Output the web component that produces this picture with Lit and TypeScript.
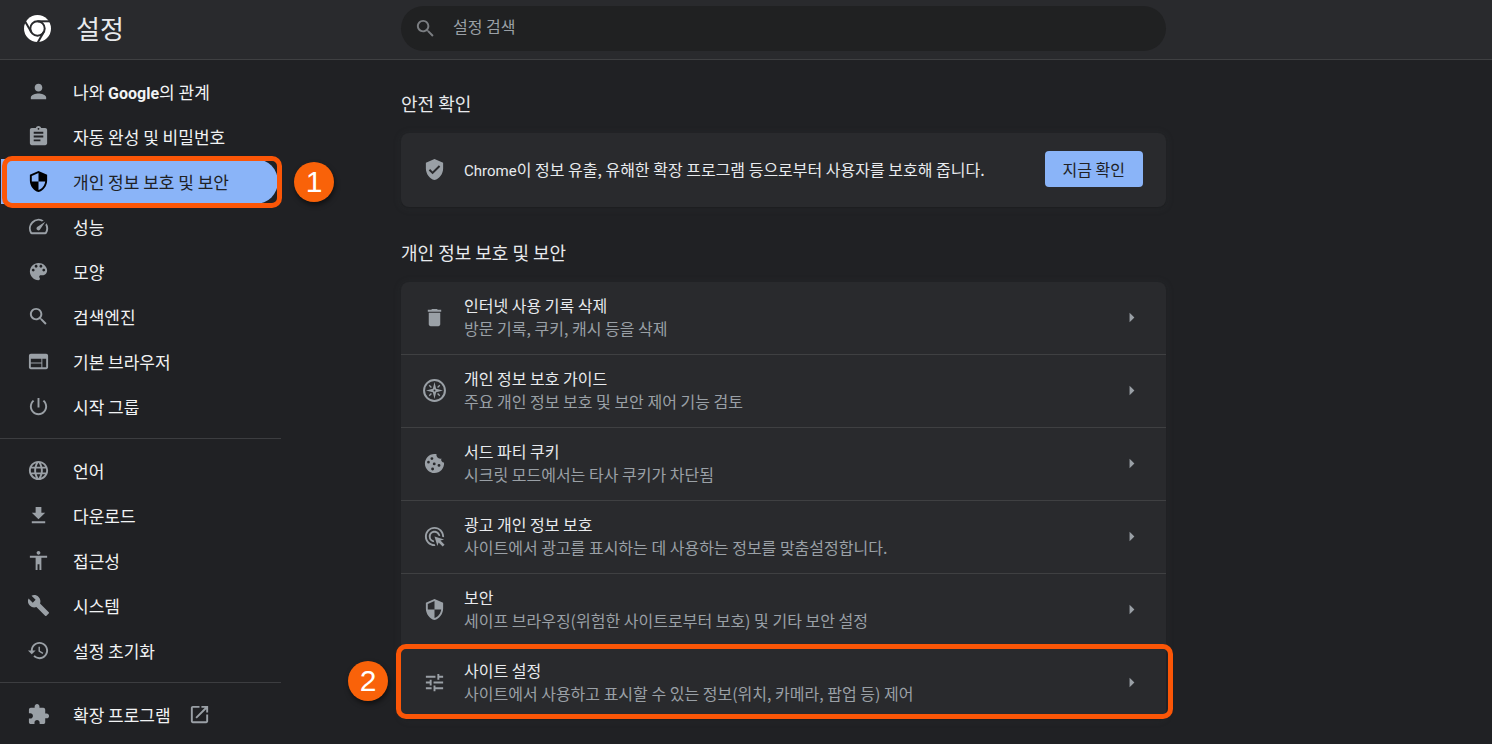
import { LitElement, html, css, svg } from "lit";
import { customElement, state } from "lit/decorators.js";
import { classMap } from "lit/directives/class-map.js";

const ICONS: Record<string, unknown> = {
  person: svg`<path d="M12 12c2.21 0 4-1.79 4-4s-1.79-4-4-4-4 1.79-4 4 1.79 4 4 4zm0 2c-2.67 0-8 1.34-8 4v2h16v-2c0-2.66-5.33-4-8-4z"/>`,
  clipboard: svg`<path d="M19 3h-4.18C14.4 1.84 13.3 1 12 1c-1.3 0-2.4.84-2.82 2H5c-1.1 0-2 .9-2 2v14c0 1.1.9 2 2 2h14c1.1 0 2-.9 2-2V5c0-1.1-.9-2-2-2zm-7 0c.55 0 1 .45 1 1s-.45 1-1 1-1-.45-1-1 .45-1 1-1zm2 14H7v-2h7v2zm3-4H7v-2h10v2zm0-4H7V7h10v2z"/>`,
  shield: svg`<path fill-rule="evenodd" d="M12 1 3 5v6c0 5.550 3.840 10.740 9 12 5.160-1.260 9-6.450 9-12V5l-9-4zM12 3.190V12H5V6.300l7-3.110zM12 12h7c-.53 4.120-3.280 7.790-7 8.940V12z"/>`,
  speed: svg`<path d="m20.380 8.570-1.230 1.850a8 8 0 0 1-.22 7.580H5.070A8 8 0 0 1 15.580 6.850l1.850-1.230A10 10 0 0 0 3.350 19a2 2 0 0 0 1.720 1h13.850a2 2 0 0 0 1.740-1 10 10 0 0 0-.27-10.440zm-9.790 6.840a2 2 0 0 0 2.830 0l5.660-8.490-8.490 5.660a2 2 0 0 0 0 2.830z"/>`,
  palette: svg`<path d="M12 3c-4.970 0-9 4.030-9 9s4.030 9 9 9c.83 0 1.500-.67 1.500-1.500 0-.39-.15-.74-.39-1.010-.23-.26-.38-.61-.38-.99 0-.83.67-1.500 1.500-1.500H16c2.760 0 5-2.240 5-5 0-4.420-4.030-8-9-8zm-5.500 9c-.83 0-1.500-.67-1.500-1.500S5.670 9 6.500 9 8 9.670 8 10.500 7.330 12 6.500 12zm3-4C8.670 8 8 7.330 8 6.500S8.670 5 9.500 5s1.500.67 1.500 1.500S10.330 8 9.500 8zm5 0c-.83 0-1.500-.67-1.500-1.500S13.670 5 14.500 5s1.500.67 1.500 1.500S15.330 8 14.500 8zm3 4c-.83 0-1.500-.67-1.500-1.500S16.670 9 17.500 9s1.500.67 1.500 1.500-.67 1.500-1.500 1.500z"/>`,
  search: svg`<path d="M15.500 14h-.79l-.28-.27C15.410 12.590 16 11.110 16 9.500 16 5.910 13.090 3 9.500 3S3 5.910 3 9.500 5.910 16 9.500 16c1.610 0 3.090-.59 4.230-1.570l.27.28v.79l5 4.990L20.490 19l-4.990-5zm-6 0C7.010 14 5 11.990 5 9.500S7.010 5 9.500 5 14 7.010 14 9.500 11.990 14 9.500 14z"/>`,
  browser: svg`<path d="M20 4H4c-1.100 0-1.990.9-1.990 2L2 18c0 1.100.9 2 2 2h16c1.100 0 2-.9 2-2V6c0-1.100-.9-2-2-2zm-5 14H4v-4h11v4zm0-5H4V9h11v4zm5 5h-4V9h4v9z"/>`,
  power: svg`<path d="M13 3h-2v10h2V3zm4.830 2.170-1.420 1.420C17.990 7.860 19 9.810 19 12c0 3.870-3.130 7-7 7s-7-3.130-7-7c0-2.190 1.010-4.140 2.580-5.420L6.170 5.170C4.230 6.820 3 9.260 3 12c0 4.970 4.030 9 9 9s9-4.030 9-9c0-2.740-1.230-5.180-3.170-6.830z"/>`,
  globe: svg`<path d="M11.990 2C6.470 2 2 6.480 2 12s4.470 10 9.990 10C17.520 22 22 17.520 22 12S17.520 2 11.990 2zm6.930 6h-2.950c-.32-1.250-.78-2.450-1.380-3.560 1.840.63 3.370 1.910 4.330 3.560zM12 4.040c.83 1.200 1.480 2.530 1.910 3.960h-3.820c.43-1.430 1.080-2.760 1.910-3.960zM4.260 14C4.100 13.360 4 12.690 4 12s.1-1.360.26-2h3.380c-.08.66-.14 1.320-.14 2s.06 1.340.14 2H4.260zm.82 2h2.950c.32 1.250.78 2.450 1.380 3.560-1.840-.63-3.370-1.900-4.330-3.560zm2.950-8H5.080c.96-1.660 2.490-2.930 4.330-3.560C8.810 5.550 8.350 6.750 8.030 8zM12 19.960c-.83-1.200-1.480-2.530-1.910-3.960h3.820c-.43 1.430-1.080 2.760-1.910 3.960zM14.340 14H9.660c-.09-.66-.16-1.320-.16-2s.07-1.350.16-2h4.680c.09.650.16 1.320.16 2s-.07 1.340-.16 2zm.25 5.560c.6-1.110 1.060-2.310 1.380-3.560h2.950c-.96 1.650-2.490 2.930-4.330 3.560zM16.360 14c.08-.66.14-1.320.14-2s-.06-1.340-.14-2h3.380c.16.64.26 1.310.26 2s-.1 1.360-.26 2h-3.380z"/>`,
  download: svg`<path d="M19 9h-4V3H9v6H5l7 7 7-7zM5 18v2h14v-2H5z"/>`,
  accessibility: svg`<path d="M12 2c1.100 0 2 .9 2 2s-.9 2-2 2-2-.9-2-2 .9-2 2-2zm9 7h-6v13h-2v-6h-2v6H9V9H3V7h18v2z"/>`,
  wrench: svg`<path d="m22.700 19-9.100-9.100c.9-2.300.4-5-1.500-6.900-2-2-5-2.400-7.400-1.300L9 6 6 9 1.600 4.700C.4 7.100.9 10.100 2.900 12.100c1.900 1.900 4.600 2.400 6.900 1.500l9.100 9.100c.4.4 1 .4 1.400 0l2.300-2.300c.5-.4.5-1.100.1-1.400z"/>`,
  history: svg`<path d="M13 3c-4.970 0-9 4.030-9 9H1l3.890 3.890.07.14L9 12H6c0-3.870 3.130-7 7-7s7 3.130 7 7-3.130 7-7 7c-1.930 0-3.680-.79-4.940-2.060l-1.420 1.420C8.270 19.990 10.510 21 13 21c4.970 0 9-4.030 9-9s-4.030-9-9-9zm-1 5v5l4.280 2.540.72-1.210-3.500-2.080V8H12z"/>`,
  extension: svg`<path d="M20.500 11H19V7c0-1.100-.9-2-2-2h-4V3.500C13 2.120 11.880 1 10.500 1S8 2.120 8 3.500V5H4c-1.100 0-1.990.9-1.990 2v3.800H3.500c1.490 0 2.700 1.210 2.700 2.700s-1.210 2.700-2.700 2.700H2V20c0 1.100.9 2 2 2h3.800v-1.500c0-1.490 1.210-2.700 2.700-2.700 1.490 0 2.700 1.210 2.700 2.700V22H17c1.100 0 2-.9 2-2v-4h1.500c1.380 0 2.500-1.120 2.500-2.500S21.880 11 20.500 11z"/>`,
  open: svg`<path d="M19 19H5V5h7V3H5c-1.110 0-2 .9-2 2v14c0 1.100.89 2 2 2h14c1.100 0 2-.9 2-2v-7h-2v7zM14 3v2h3.590l-9.830 9.830 1.410 1.410L19 6.410V10h2V3h-7z"/>`,
  verified: svg`<path d="M12 1 3 5v6c0 5.550 3.840 10.740 9 12 5.160-1.260 9-6.450 9-12V5l-9-4zm-2 16-4-4 1.410-1.410L10 14.170l6.590-6.590L18 9l-8 8z"/>`,
  trash: svg`<path d="M6 19c0 1.100.9 2 2 2h8c1.100 0 2-.9 2-2V7H6v12zM19 4h-3.500l-1-1h-5l-1 1H5v2h14V4z"/>`,
  compass: svg`<circle cx="12" cy="12" r="10.900" fill="none" stroke="currentColor" stroke-width="2.100"/><path fill-rule="evenodd" d="m12 3.200 1.700 7.100 7.100 1.700-7.100 1.700-1.700 7.100-1.700-7.100L3.200 12l7.100-1.700zM12 11a1 1 0 1 0 0 2 1 1 0 0 0 0-2z"/><path stroke="currentColor" stroke-width="1.400" d="m6.500 6.500 2.300 2.300M17.500 6.500l-2.300 2.300M17.500 17.500l-2.300-2.300M6.500 17.500l2.300-2.300"/>`,
  cookie: svg`<path fill-rule="evenodd" d="M21.950 10.990c-1.790-.03-3.700-1.950-2.680-4.220-2.980 1-5.770-1.590-5.190-4.560C6.950.710 2 6.580 2 12c0 5.520 4.480 10 10 10 5.890 0 10.540-5.080 9.950-11.010zM9.300 5.400a1.500 1.500 0 1 1 0 3 1.500 1.500 0 0 1 0-3zM5.700 9.200a1.400 1.400 0 1 1 0 2.800 1.400 1.400 0 0 1 0-2.800zM11.700 10.900a1.500 1.500 0 1 1 0 3 1.500 1.500 0 0 1 0-3zM16.700 12.500a1.500 1.500 0 1 1 0 3 1.500 1.500 0 0 1 0-3zM10 16.200a1.500 1.500 0 1 1 0 3 1.500 1.500 0 0 1 0-3z"/>`,
  ads: svg`<path d="M11.710 17.990A5.993 5.993 0 0 1 6 12c0-3.310 2.690-6 6-6 3.220 0 5.840 2.530 5.990 5.710l-2.100-.63a3.999 3.999 0 1 0-4.810 4.810l.63 2.100zM22 12c0 .3-.01.6-.04.9l-1.970-.59c.01-.1.01-.21.01-.31 0-4.420-3.580-8-8-8s-8 3.580-8 8 3.580 8 8 8c.1 0 .21 0 .31-.01l.59 1.970c-.3.030-.6.040-.9.040-5.520 0-10-4.480-10-10S6.480 2 12 2s10 4.480 10 10zm-3.770 4.260L22 15l-10-3 3 10 1.260-3.770 4.270 4.270 1.980-1.980-4.280-4.260z"/>`,
  tune: svg`<path d="M3 17v2h6v-2H3zM3 5v2h10V5H3zm10 16v-2h8v-2h-8v-2h-2v6h2zM7 9v2H3v2h4v2h2V9H7zm14 4v-2H11v2h10zm-6-4h2V7h4V5h-4V3h-2v6z"/>`,
  arrow: svg`<path d="m10 7 5 5-5 5z"/>`,
};

const icon = (name: string) =>
  html`<svg class="icon" viewBox="0 0 24 24" aria-hidden="true">${ICONS[name]}</svg>`;

interface NavItem {
  id: string;
  icon: string;
  label: unknown;
  external?: boolean;
  step?: number;
}

const NAV: NavItem[][] = [
  [
    { id: "people", icon: "person", label: html`나와 <b class="google">Google</b>의 관계` },
    { id: "autofill", icon: "clipboard", label: "자동 완성 및 비밀번호" },
    { id: "privacy", icon: "shield", label: "개인 정보 보호 및 보안", step: 1 },
    { id: "performance", icon: "speed", label: "성능" },
    { id: "appearance", icon: "palette", label: "모양" },
    { id: "search", icon: "search", label: "검색엔진" },
    { id: "browser", icon: "browser", label: "기본 브라우저" },
    { id: "startup", icon: "power", label: "시작 그룹" },
  ],
  [
    { id: "languages", icon: "globe", label: "언어" },
    { id: "downloads", icon: "download", label: "다운로드" },
    { id: "accessibility", icon: "accessibility", label: "접근성" },
    { id: "system", icon: "wrench", label: "시스템" },
    { id: "reset", icon: "history", label: "설정 초기화" },
  ],
  [{ id: "extensions", icon: "extension", label: "확장 프로그램", external: true }],
];

const ROWS = [
  { icon: "trash", title: "인터넷 사용 기록 삭제", note: "방문 기록, 쿠키, 캐시 등을 삭제" },
  { icon: "compass", title: "개인 정보 보호 가이드", note: "주요 개인 정보 보호 및 보안 제어 기능 검토" },
  { icon: "cookie", title: "서드 파티 쿠키", note: "시크릿 모드에서는 타사 쿠키가 차단됨" },
  { icon: "ads", title: "광고 개인 정보 보호", note: "사이트에서 광고를 표시하는 데 사용하는 정보를 맞춤설정합니다." },
  { icon: "shield", title: "보안", note: "세이프 브라우징(위험한 사이트로부터 보호) 및 기타 보안 설정" },
  { icon: "tune", title: "사이트 설정", note: "사이트에서 사용하고 표시할 수 있는 정보(위치, 카메라, 팝업 등) 제어", step: 2 },
];

@customElement("app-root")
export class AppRoot extends LitElement {
  @state() private selected = "privacy";

  static styles = css`
    :host {
      display: block;
      min-height: 100vh;
      background: #202124;
      color: #e8eaed;
      font-family: "Noto Sans CJK KR", sans-serif;
      font-size: 16px;
      line-height: 23px;
    }
    * {
      box-sizing: border-box;
    }
    .header,
    .body {
      display: grid;
      grid-template-columns: 281px minmax(24px, 120fr) minmax(0, 765px) minmax(24px, 326fr);
    }
    .header {
      align-items: center;
      height: 60px;
      padding-bottom: 2px;
      background: #292a2d;
      border-bottom: 1px solid #3f4042;
    }
    .brand {
      display: flex;
      align-items: center;
      gap: 25px;
      padding-left: 24px;
    }
    .logo {
      width: 27px;
      height: 27px;
    }
    .title {
      margin: 0;
      padding-bottom: 2px;
      font-size: 26px;
      line-height: 36px;
      font-weight: 400;
    }
    .search {
      grid-column: 3;
      display: flex;
      align-items: center;
      gap: 16px;
      height: 45px;
      padding: 0 13px;
      border-radius: 23px;
      background: #202122;
      color: #7b7e82;
    }
    .field {
      flex: 1;
      min-width: 0;
      padding: 0 0 4px;
      border: 0;
      outline: 0;
      background: none;
      color: #e8eaed;
      font: inherit;
    }
    .field::placeholder {
      color: #9aa0a6;
      opacity: 1;
    }
    .icon {
      flex: none;
      display: block;
      width: 23px;
      height: 23px;
      fill: currentColor;
      color: #9aa0a6;
    }
    .search .icon {
      color: inherit;
    }
    .nav {
      padding-top: 9px;
    }
    .group {
      margin: 0;
      padding: 0;
      list-style: none;
    }
    .group + .group {
      margin-top: 9px;
      padding-top: 9px;
      border-top: 1px solid #3c3d40;
    }
    .item {
      position: relative;
      margin: 0 3px 0 1px;
    }
    .link {
      display: flex;
      align-items: center;
      gap: 23px;
      height: 45px;
      padding-left: 26px;
      border-radius: 0 23px 23px 0;
      color: #f1f3f4;
      font-size: 17px;
      text-decoration: none;
    }
    .link.selected {
      background: #8ab4f8;
      color: #202124;
    }
    .link.selected .icon {
      color: #000;
    }
    .label {
      display: flex;
      align-items: center;
      gap: 17px;
      white-space: nowrap;
    }
    .google,
    .latin {
      font-family: Roboto, sans-serif;
      line-height: 1;
    }
    .google {
      font-size: 16px;
    }
    .latin {
      font-size: 15px;
    }
    .frame {
      position: absolute;
      z-index: 1;
      border: 5px solid #fb5607;
      border-radius: 10px;
      pointer-events: none;
    }
    .item .frame {
      inset: -3px -4px -4px 1px;
    }
    .row .frame {
      inset: -3px -7px 0 -5px;
    }
    .badge {
      position: absolute;
      z-index: 1;
      display: grid;
      place-items: center;
      width: 40px;
      height: 40px;
      border-radius: 50%;
      background: #f96209;
      box-shadow: 1px 3px 5px rgba(0, 0, 0, 0.5);
      color: #fff;
      font-family: "Liberation Sans", sans-serif;
      font-size: 30px;
      line-height: 40px;
    }
    .item .badge {
      top: 3px;
      right: -56px;
    }
    .row .badge {
      top: 14px;
      left: -53px;
    }
    .main {
      grid-column: 3;
      padding: 31px 0 25px;
    }
    .section + .section {
      margin-top: 33px;
    }
    .heading {
      margin: 0 0 18px;
      font-size: 18px;
      line-height: 24px;
      font-weight: 400;
    }
    .card {
      border-radius: 8px;
      background: #292a2d;
      box-shadow: 0 1px 2px rgba(0, 0, 0, 0.2), 0 1px 6px 2px rgba(60, 64, 67, 0.15);
    }
    .check,
    .open {
      display: flex;
      align-items: center;
      gap: 18px;
      width: 100%;
      padding: 7px 23px 9px 22px;
    }
    .check {
      min-height: 74px;
    }
    .text {
      flex: 1;
      min-width: 0;
    }
    .action {
      height: 36px;
      padding: 0 18px;
      border: 0;
      border-radius: 4px;
      background: #8ab4f8;
      color: #202124;
      font: inherit;
      white-space: nowrap;
    }
    .row {
      position: relative;
    }
    .row + .row {
      border-top: 1px solid #3f4042;
    }
    .open {
      min-height: 72px;
      border: 0;
      background: none;
      color: inherit;
      font: inherit;
      text-align: left;
    }
    .name,
    .note {
      display: block;
    }
    .note {
      color: #9aa0a6;
    }
  `;

  private marker(step?: number) {
    return step ? html`<span class="frame"></span><span class="badge">${step}</span>` : null;
  }

  private navItem(item: NavItem) {
    return html`<li class="item">
      <a
        class=${classMap({ link: true, selected: item.id === this.selected })}
        href="#${item.id}"
        @click=${() => (this.selected = item.id)}
        >${icon(item.icon)}<span class="label"
          ><span>${item.label}</span>${item.external ? icon("open") : null}</span
        ></a
      >
      ${this.marker(item.step)}
    </li>`;
  }

  render() {
    return html`
      <header class="header">
        <div class="brand">
          <svg class="logo" viewBox="0 0 27 27" aria-hidden="true">
            <circle cx="13.5" cy="13.5" r="13.5" fill="#fff" />
            <g fill="none" stroke="#292a2d" stroke-width="2">
              <circle cx="13.5" cy="13.5" r="7.200" />
              <path d="M13.500 6.300H27" />
              <path d="M13.500 6.300H27" transform="rotate(120 13.5 13.5)" />
              <path d="M13.500 6.300H27" transform="rotate(240 13.5 13.5)" />
            </g>
          </svg>
          <h1 class="title">설정</h1>
        </div>
        <label class="search">
          ${icon("search")}
          <input class="field" type="text" placeholder="설정 검색" aria-label="설정 검색" />
        </label>
      </header>
      <div class="body">
        <nav class="nav">
          ${NAV.map((g) => html`<ul class="group">${g.map((i) => this.navItem(i))}</ul>`)}
        </nav>
        <main class="main">
          <section class="section">
            <h2 class="heading">안전 확인</h2>
            <div class="card check">
              ${icon("verified")}
              <span class="text"
                ><span class="latin">Chrome</span>이 정보 유출, 유해한 확장 프로그램 등으로부터 사용자를 보호해 줍니다.</span
              >
              <button class="action" type="button">지금 확인</button>
            </div>
          </section>
          <section class="section">
            <h2 class="heading">개인 정보 보호 및 보안</h2>
            <div class="card">
              ${ROWS.map(
                (r) => html`<div class="row">
                  <button class="open" type="button">
                    ${icon(r.icon)}
                    <span class="text"><span class="name">${r.title}</span><span class="note">${r.note}</span></span>
                    ${icon("arrow")}
                  </button>
                  ${this.marker(r.step)}
                </div>`
              )}
            </div>
          </section>
        </main>
      </div>
    `;
  }
}
